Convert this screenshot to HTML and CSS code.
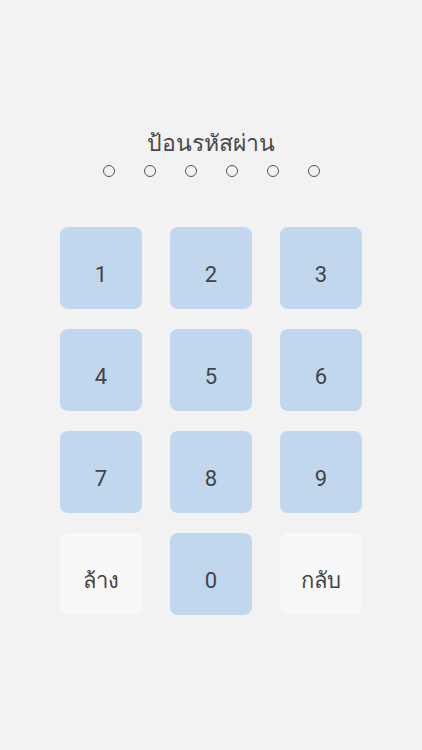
FILE: index.html
```html
<!DOCTYPE html>
<html lang="th">
<head>
  <meta charset="UTF-8">
  <title>ป้อนรหัสผ่าน</title>
  <link rel="stylesheet" href="styles.css">
</head>
<body>
  <div class="screen">
    <h2 class="title">ป้อนรหัสผ่าน</h2>
    <div class="dots">
      <span class="dot"></span>
      <span class="dot"></span>
      <span class="dot"></span>
      <span class="dot"></span>
      <span class="dot"></span>
      <span class="dot"></span>
    </div>

    <div class="keypad">
      <button class="key">1</button>
      <button class="key">2</button>
      <button class="key">3</button>
      <button class="key">4</button>
      <button class="key">5</button>
      <button class="key">6</button>
      <button class="key">7</button>
      <button class="key">8</button>
      <button class="key">9</button>
      <button class="key key-light">ล้าง</button>
      <button class="key">0</button>
      <button class="key key-light">กลับ</button>
    </div>
  </div>
</body>
</html>
```

FILE: styles.css
```css
* {
  font-family: Roboto, "Noto Sans", "DejaVu Sans", sans-serif;
  box-sizing: border-box;
}

body {
  margin: 0;
  background-color: #f2f2f2;
  color: #444;
}

.screen {
  display: flex;
  flex-direction: column;
  align-items: center;
  padding-top: 128px;
}

.title {
  margin: 0;
  font-size: 23px;
  font-weight: normal;
  line-height: 32px;
  color: #4a4a4a;
}

.dots {
  display: flex;
  gap: 29px;
  margin-top: 5px;
}

.dot {
  width: 12px;
  height: 12px;
  border: 1.5px solid #555;
  border-radius: 50%;
}

.keypad {
  display: grid;
  grid-template-columns: repeat(3, 82px);
  grid-auto-rows: 82px;
  column-gap: 28px;
  row-gap: 20px;
  margin-top: 50px;
}

.key {
  border: none;
  border-radius: 8px;
  background-color: #c0d7ee;
  color: #444;
  font-size: 22px;
  padding: 12px 0 0;
  cursor: pointer;
}

.key-light {
  background-color: #f8f8f8;
}
```
